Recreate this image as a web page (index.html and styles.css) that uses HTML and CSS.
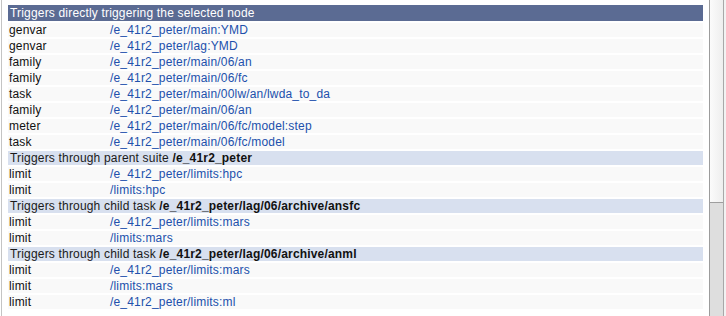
FILE: index.html
```html
<!DOCTYPE html>
<html>
<head>
<meta charset="utf-8">
<link rel="stylesheet" href="styles.css">
</head>
<body>
<div class="page">
  <div class="main">
    <table class="triggers">
      <tr class="head"><td colspan="2">Triggers directly triggering the selected node</td></tr>
      <tr><td class="kind">genvar</td><td><a href="#">/e_41r2_peter/main:YMD</a></td></tr>
      <tr><td class="kind">genvar</td><td><a href="#">/e_41r2_peter/lag:YMD</a></td></tr>
      <tr><td class="kind">family</td><td><a href="#">/e_41r2_peter/main/06/an</a></td></tr>
      <tr><td class="kind">family</td><td><a href="#">/e_41r2_peter/main/06/fc</a></td></tr>
      <tr><td class="kind">task</td><td><a href="#">/e_41r2_peter/main/00lw/an/lwda_to_da</a></td></tr>
      <tr><td class="kind">family</td><td><a href="#">/e_41r2_peter/main/06/an</a></td></tr>
      <tr><td class="kind">meter</td><td><a href="#">/e_41r2_peter/main/06/fc/model:step</a></td></tr>
      <tr><td class="kind">task</td><td><a href="#">/e_41r2_peter/main/06/fc/model</a></td></tr>
      <tr class="sub"><td colspan="2">Triggers through parent suite <b>/e_41r2_peter</b></td></tr>
      <tr><td class="kind">limit</td><td><a href="#">/e_41r2_peter/limits:hpc</a></td></tr>
      <tr><td class="kind">limit</td><td><a href="#">/limits:hpc</a></td></tr>
      <tr class="sub"><td colspan="2">Triggers through child task <b>/e_41r2_peter/lag/06/archive/ansfc</b></td></tr>
      <tr><td class="kind">limit</td><td><a href="#">/e_41r2_peter/limits:mars</a></td></tr>
      <tr><td class="kind">limit</td><td><a href="#">/limits:mars</a></td></tr>
      <tr class="sub"><td colspan="2">Triggers through child task <b>/e_41r2_peter/lag/06/archive/anml</b></td></tr>
      <tr><td class="kind">limit</td><td><a href="#">/e_41r2_peter/limits:mars</a></td></tr>
      <tr><td class="kind">limit</td><td><a href="#">/limits:mars</a></td></tr>
      <tr><td class="kind">limit</td><td><a href="#">/e_41r2_peter/limits:ml</a></td></tr>
    </table>
  </div>
  <div class="scrollbar">
    <div class="track">
      <div class="thumb"></div>
      <div class="rest"></div>
    </div>
  </div>
</div>
</body>
</html>
```

FILE: styles.css
```css
html, body {
  margin: 0;
  padding: 0;
  background: #ffffff;
  height: 316px;
  overflow: hidden;
}
.page {
  display: flex;
  height: 316px;
  font-family: "Liberation Sans", Arial, sans-serif;
  font-size: 12px;
  letter-spacing: 0.18px;
  color: #111111;
}
.main {
  flex: 1;
  margin-left: 1px;
  border-left: 1px solid #c4c4c4;
  padding: 3px 6px 0 6px;
  overflow: hidden;
}
.triggers {
  width: 100%;
  border-collapse: separate;
  border-spacing: 0 2px;
}
.triggers td {
  background: #f9f9f9;
  height: 14px;
  padding: 0 0 0 1px;
  line-height: 14px;
  white-space: nowrap;
}
.triggers td.kind {
  width: 100px;
}
.triggers a {
  color: #2150ac;
  text-decoration: none;
}
.triggers tr.head td {
  background: #5b6b93;
  color: #ffffff;
  height: 16px;
  line-height: 16px;
  padding-left: 2px;
}
.triggers tr.sub td {
  background: #d8e0ef;
  color: #1a1a1a;
  padding-left: 2px;
}
.triggers tr.sub b {
  color: #111111;
}
.scrollbar {
  width: 17px;
  display: flex;
  background: #f2f2f2;
}
.track {
  width: 13px;
  border-left: 1px solid #9c9c9c;
  border-right: 1px solid #a8a8a8;
  display: flex;
  flex-direction: column;
}
.thumb {
  height: 202px;
  background: linear-gradient(to right, #fbfbfb, #eeeeee);
  border-bottom: 1px solid #9e9e9e;
}
.rest {
  flex: 1;
  background: #dedede;
}
```
